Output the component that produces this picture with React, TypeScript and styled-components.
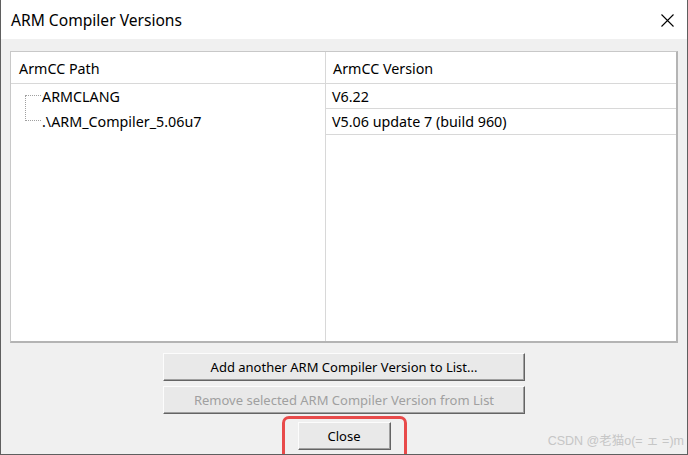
import React from 'react';
import styled, { createGlobalStyle } from 'styled-components';

const GlobalStyle = createGlobalStyle`
  html, body {
    margin: 0;
    padding: 0;
    background: #f0f0f0;
  }
  body {
    font-family: 'Noto Sans', 'Open Sans', 'Noto Sans CJK SC', sans-serif;
  }
`;

const Window = styled.div`
  width: 688px;
  height: 455px;
  box-sizing: border-box;
  border-left: 1px solid #5f5f5f;
  border-right: 1px solid #5f5f5f;
  border-bottom: 1px solid #5f5f5f;
  display: flex;
  flex-direction: column;
  background: #f0f0f0;
  position: relative;
  overflow: hidden;
`;

const TitleBar = styled.div`
  height: 39px;
  flex: none;
  background: #fff;
  display: flex;
  align-items: center;
  justify-content: space-between;
  padding: 0 13px 0 10px;
  font-size: 15.6px;
  color: #000;
`;

const CloseX = styled.svg`
  width: 13px;
  height: 13px;
  margin-top: 2px;
`;

const Body = styled.div`
  flex: 1;
  display: flex;
  flex-direction: column;
  padding: 12px 9px 0 9px;
`;

const ListBox = styled.div`
  height: 292px;
  box-sizing: border-box;
  background: #fff;
  border-top: 1px solid #c8c8c8;
  border-left: 1px solid #c8c8c8;
  border-right: 2px solid #b4b4b4;
  border-bottom: 2px solid #b4b4b4;
  display: grid;
  grid-template-columns: 315px 1fr;
  grid-template-rows: 32px 1fr;
  font-size: 14.3px;
  color: #000;
`;

const HeadCell = styled.div<{ $last?: boolean }>`
  display: flex;
  align-items: center;
  padding-left: ${(p) => (p.$last ? '7px' : '8px')};
  padding-top: 1px;
  border-bottom: 1px solid #d8d8d8;
  border-right: ${(p) => (p.$last ? 'none' : '1px solid #d8d8d8')};
`;

const TreeCol = styled.div`
  border-right: 1px solid #d8d8d8;
`;

const TreeRow = styled.div<{ $h: number }>`
  height: ${(p) => p.$h}px;
  display: flex;
  align-items: center;
  position: relative;
  padding-left: 31px;
`;

const TreeLine = styled.span<{ $first?: boolean }>`
  position: absolute;
  left: 14px;
  width: 15px;
  top: ${(p) => (p.$first ? '11px' : '-13px')};
  height: ${(p) => (p.$first ? '13px' : '25px')};
  border-left: 1px dotted #a0a0a0;
  border-top: ${(p) => (p.$first ? '1px dotted #a0a0a0' : 'none')};
  border-bottom: ${(p) => (p.$first ? 'none' : '1px dotted #a0a0a0')};
`;

const VersionCol = styled.div`
  display: flex;
  flex-direction: column;
`;

const VersionRow = styled.div<{ $h: number }>`
  height: ${(p) => p.$h}px;
  display: flex;
  align-items: center;
  padding-left: 6px;
  border-bottom: 1px solid #d8d8d8;
`;

const Buttons = styled.div`
  display: flex;
  flex-direction: column;
  align-items: center;
  gap: 5px;
  margin-top: 10px;
`;

const Button = styled.button<{ $width: number; $disabled?: boolean }>`
  width: ${(p) => p.$width}px;
  height: 28px;
  box-sizing: border-box;
  font-family: inherit;
  font-size: 13px;
  color: ${(p) => (p.$disabled ? '#a0a0a0' : '#000')};
  background: #e9e9e9;
  border-top: 1px solid #fcfcfc;
  border-left: 1px solid #fcfcfc;
  border-right: 1px solid #646464;
  border-bottom: 1px solid #646464;
  box-shadow: inset -1px -1px 0 #a0a0a0;
  padding: 0;
  cursor: default;
`;

const Highlight = styled.div`
  border: 3px solid #e84a4a;
  border-radius: 7px;
  padding: 3px 13px 8px;
  margin-top: -3px;
`;

const Watermark = styled.div`
  position: absolute;
  right: 3px;
  bottom: 5px;
  font-size: 12.5px;
  color: #c6c6c6;
  font-family: 'Liberation Sans', 'Noto Sans CJK SC', sans-serif;
  white-space: nowrap;
`;

export default function App() {
  return (
    <>
      <GlobalStyle />
      <Window>
        <TitleBar>
          <span>ARM Compiler Versions</span>
          <CloseX viewBox="0 0 13 13">
            <path d="M0.5 0.5 L12.5 12.5 M12.5 0.5 L0.5 12.5" stroke="#000" strokeWidth="1.1" fill="none" />
          </CloseX>
        </TitleBar>
        <Body>
          <ListBox>
            <HeadCell>ArmCC Path</HeadCell>
            <HeadCell $last>ArmCC Version</HeadCell>
            <TreeCol>
              <TreeRow $h={24}>
                <TreeLine $first />
                ARMCLANG
              </TreeRow>
              <TreeRow $h={26}>
                <TreeLine />
                .\ARM_Compiler_5.06u7
              </TreeRow>
            </TreeCol>
            <VersionCol>
              <VersionRow $h={24}>V6.22</VersionRow>
              <VersionRow $h={25}>V5.06 update 7 (build 960)</VersionRow>
            </VersionCol>
          </ListBox>
          <Buttons>
            <Button $width={362}>Add another ARM Compiler Version to List...</Button>
            <Button $width={362} $disabled>
              Remove selected ARM Compiler Version from List
            </Button>
            <Highlight>
              <Button $width={93}>Close</Button>
            </Highlight>
          </Buttons>
        </Body>
        <Watermark>CSDN @老猫o(= ェ =)m</Watermark>
      </Window>
    </>
  );
}
